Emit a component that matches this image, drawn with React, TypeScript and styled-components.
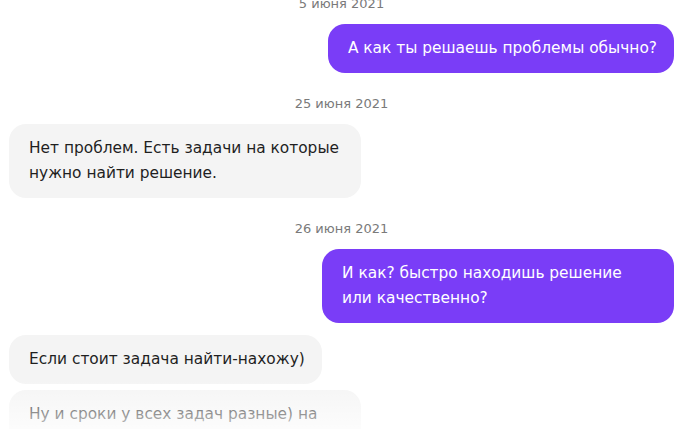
import React from "react";
import styled, { createGlobalStyle } from "styled-components";

const Global = createGlobalStyle`
  html, body { margin: 0; padding: 0; background: #fff; }
  body { font-family: "DejaVu Sans", Tahoma, sans-serif; overflow: hidden; }
`;

const Viewport = styled.div`
  position: relative;
  width: 693px;
  height: 429px;
  overflow: hidden;
  background: #fff;
`;

const Feed = styled.div`
  display: flex;
  flex-direction: column;
  padding: 0 19px 0 9px;
  margin-top: -27px;
`;

const DateLabel = styled.div`
  align-self: center;
  margin: 21px 0 10px;
  font-size: 13px;
  line-height: 20px;
  color: #7a7a7a;
`;

const Bubble = styled.div<{ $out?: boolean; $tight?: boolean }>`
  align-self: ${(p) => (p.$out ? "flex-end" : "flex-start")};
  max-width: 352px;
  box-sizing: border-box;
  padding: 12px 17px 12px 20px;
  margin-top: ${(p) => (p.$tight ? "6px" : "12px")};
  border-radius: 17px;
  font-size: 15.4px;
  line-height: 25px;
  background: ${(p) => (p.$out ? "#7a3df7" : "#f4f4f4")};
  color: ${(p) => (p.$out ? "#ffffff" : "#1f1f1f")};
`;

const FirstAfterDate = styled(Bubble)`
  margin-top: 0;
`;

const Fade = styled.div`
  position: absolute;
  left: 0;
  right: 0;
  bottom: 0;
  height: 50px;
  background: linear-gradient(to bottom, rgba(255,255,255,0) 0%, rgba(255,255,255,0.75) 100%);
  pointer-events: none;
`;

export default function App() {
  return (
    <>
      <Global />
      <Viewport>
        <Feed>
          <DateLabel>5 июня 2021</DateLabel>
          <FirstAfterDate $out>А как ты решаешь проблемы обычно?</FirstAfterDate>
          <DateLabel>25 июня 2021</DateLabel>
          <FirstAfterDate>Нет проблем. Есть задачи на которые нужно найти решение.</FirstAfterDate>
          <DateLabel>26 июня 2021</DateLabel>
          <FirstAfterDate $out>И как? быстро находишь решение или{"\u00A0"}качественно?</FirstAfterDate>
          <Bubble>Если стоит задача найти-нахожу)</Bubble>
          <Bubble $tight>Ну и сроки у всех задач разные) на разные задачи по-разному</Bubble>
        </Feed>
        <Fade />
      </Viewport>
    </>
  );
}
